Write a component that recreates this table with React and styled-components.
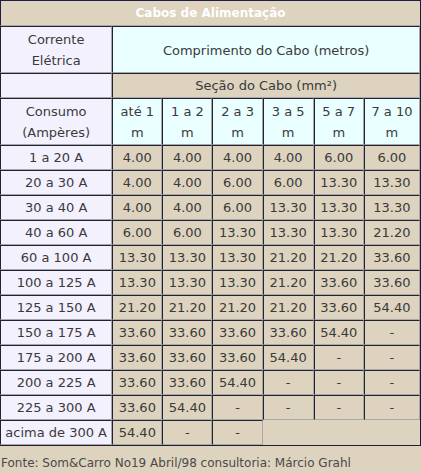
import React from "react";
import styled, { createGlobalStyle } from "styled-components";

const GlobalStyle = createGlobalStyle`
	html, body {
		margin: 0;
		padding: 0;
		background: #ddd3be;
	}
	body {
		font-family: "DejaVu Sans", Verdana, sans-serif;
		color: #3a3a3a;
	}
`;

const widths = [112, 50, 50, 50, 51, 50, 56];

const lengths = ["até 1", "1 a 2", "2 a 3", "3 a 5", "5 a 7", "7 a 10"];

const rows = [
	["1 a 20 A", "4.00", "4.00", "4.00", "4.00", "6.00", "6.00"],
	["20 a 30 A", "4.00", "4.00", "6.00", "6.00", "13.30", "13.30"],
	["30 a 40 A", "4.00", "4.00", "6.00", "13.30", "13.30", "13.30"],
	["40 a 60 A", "6.00", "6.00", "13.30", "13.30", "13.30", "21.20"],
	["60 a 100 A", "13.30", "13.30", "13.30", "21.20", "21.20", "33.60"],
	["100 a 125 A", "13.30", "13.30", "13.30", "21.20", "33.60", "33.60"],
	["125 a 150 A", "21.20", "21.20", "21.20", "21.20", "33.60", "54.40"],
	["150 a 175 A", "33.60", "33.60", "33.60", "33.60", "54.40", "-"],
	["175 a 200 A", "33.60", "33.60", "33.60", "54.40", "-", "-"],
	["200 a 225 A", "33.60", "33.60", "54.40", "-", "-", "-"],
	["225 a 300 A", "33.60", "54.40", "-", "-", "-", "-"],
	["acima de 300 A", "54.40", "-", "-"],
];

const App = () => {
	return (
		<>
			<GlobalStyle />
			<Table>
				<colgroup>
					{widths.map((w, i) => (
						<Col key={i} $w={w} />
					))}
				</colgroup>
				<tbody>
					<tr>
						<Title colSpan={7}>Cabos de Alimentação</Title>
					</tr>
					<tr>
						<Cell $tone="lilac" $tall>
							Corrente
							<br />
							Elétrica
						</Cell>
						<Cell $tone="cyan" $tall colSpan={6}>
							Comprimento do Cabo (metros)
						</Cell>
					</tr>
					<tr>
						<Cell $tone="lilac">&nbsp;</Cell>
						<Cell colSpan={6}>Seção do Cabo (mm²)</Cell>
					</tr>
					<tr>
						<Cell $tone="lilac" $tall>
							Consumo
							<br />
							(Ampères)
						</Cell>
						{lengths.map((l) => (
							<Cell $tone="cyan" $tall key={l}>
								{l}
								<br />m
							</Cell>
						))}
					</tr>
					{rows.map((row) => (
						<tr key={row[0]}>
							{row.map((v, i) => (
								<Cell key={i} $tone={i === 0 ? "lilac" : undefined}>
									{v}
								</Cell>
							))}
						</tr>
					))}
				</tbody>
			</Table>
			<Source>Fonte: Som&amp;Carro No19 Abril/98 consultoria: Márcio Grahl</Source>
		</>
	);
};

export default App;

const Table = styled.table`
	width: 421px;
	table-layout: fixed;
	border-collapse: separate;
	border-spacing: 0;
	border-right: 1px solid #1e1e38;
	border-bottom: 1px solid #1e1e38;
	background: #ddd3be;
	font-size: 13px;
`;

const Col = styled.col`
	width: ${(p) => (p.$w ? `${p.$w}px` : "auto")};
`;

const Title = styled.th`
	height: 24px;
	padding: 0;
	border-top: 1px solid #1e1e48;
	border-left: 1px solid #1e1e48;
	border-bottom: 1px solid #a8a8a8;
	color: #ffffff;
	font-size: 12px;
	font-weight: bold;
	text-align: center;
`;

const tones = {
	lilac: "#f4f1ff",
	cyan: "#eaffff",
};

const Cell = styled.td`
	padding: ${(p) => (p.$tall ? "2px 0 1px" : "1px 0")};
	line-height: 21px;
	text-align: center;
	white-space: nowrap;
	overflow: hidden;
	background: ${(p) => tones[p.$tone] || "#ddd3be"};
	border-top: 1px solid #222230;
	border-left: 1px solid #222230;
	border-right: 1px solid #a8a8a8;
	border-bottom: 1px solid #a8a8a8;
`;

const Source = styled.div`
	padding: 10px 0 0 1px;
	font-size: 12px;
	color: #4a4a4a;
`;
